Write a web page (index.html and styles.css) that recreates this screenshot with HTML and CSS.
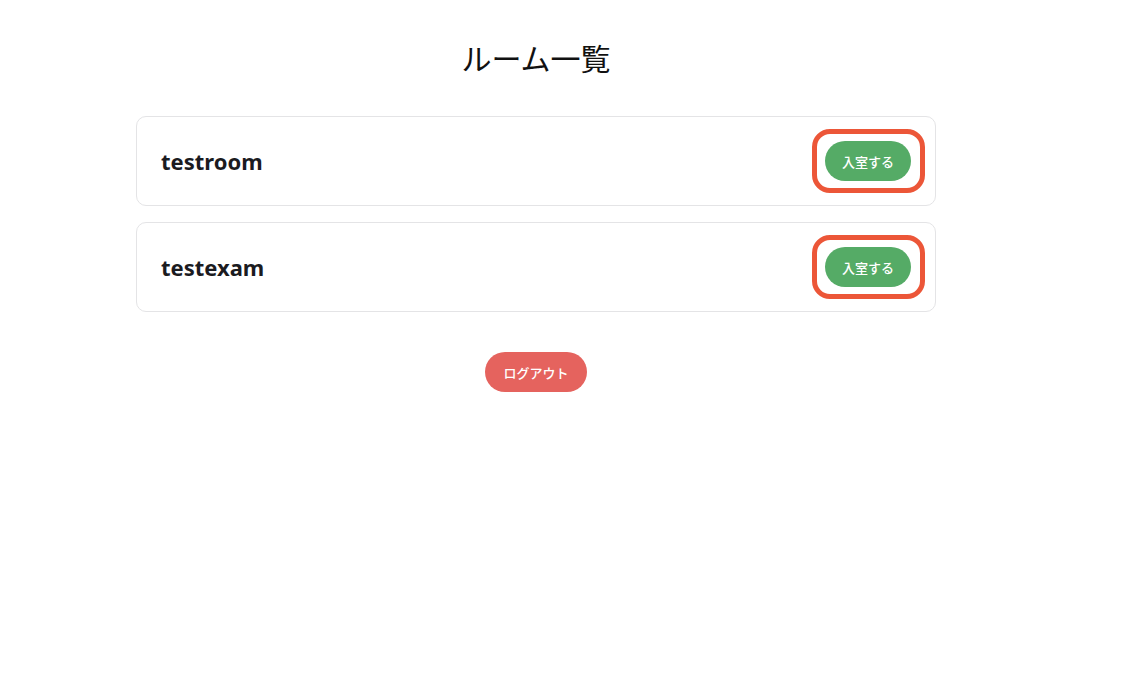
FILE: index.html
```html
<!DOCTYPE html>
<html lang="ja">
<head>
  <meta charset="UTF-8" />
  <meta name="viewport" content="width=device-width, initial-scale=1.0" />
  <title>ルーム一覧</title>
  <link rel="stylesheet" href="styles.css">
</head>
<body>

<div class="page">
  <h1>ルーム一覧</h1>

  <ul class="rooms">
    <li class="room">
      <span class="room-name">testroom</span>
      <span class="mark"><button class="enter">入室する</button></span>
    </li>
    <li class="room">
      <span class="room-name">testexam</span>
      <span class="mark"><button class="enter">入室する</button></span>
    </li>
  </ul>

  <div class="actions">
    <button class="logout">ログアウト</button>
  </div>
</div>

</body>
</html>
```

FILE: styles.css
```css
body { margin: 0; background: #fff; font-family: "Noto Sans", "Noto Sans CJK JP", sans-serif; color: #1a1a1a; }
.page { width: 800px; margin-left: 136px; padding-top: 33px; }
h1 { margin: 0 0 35px; text-align: center; font-family: "Noto Sans CJK JP", sans-serif; font-weight: 400; font-size: 30px; line-height: 48px; color: #111; }
.rooms { list-style: none; margin: 0; padding: 0; display: flex; flex-direction: column; gap: 16px; }
.room { display: flex; align-items: center; justify-content: space-between; height: 88px; padding: 0 10px 0 24px; border: 1px solid #e4e4e6; border-radius: 10px; }
.room-name { font-size: 22px; font-weight: 700; color: #1b1b1f; }
.mark { display: flex; padding: 7px 9px 7px 8px; border: 5px solid #ec5638; border-radius: 18px; }
button { font-family: "Noto Sans CJK JP", sans-serif; border: none; color: #fff; font-size: 13px; font-weight: 500; cursor: pointer; }
.enter { width: 86px; height: 40px; border-radius: 20px; background: #55ab66; }
.actions { display: flex; justify-content: center; margin-top: 40px; }
.logout { width: 102px; height: 40px; border-radius: 20px; background: #e5635e; }
```
